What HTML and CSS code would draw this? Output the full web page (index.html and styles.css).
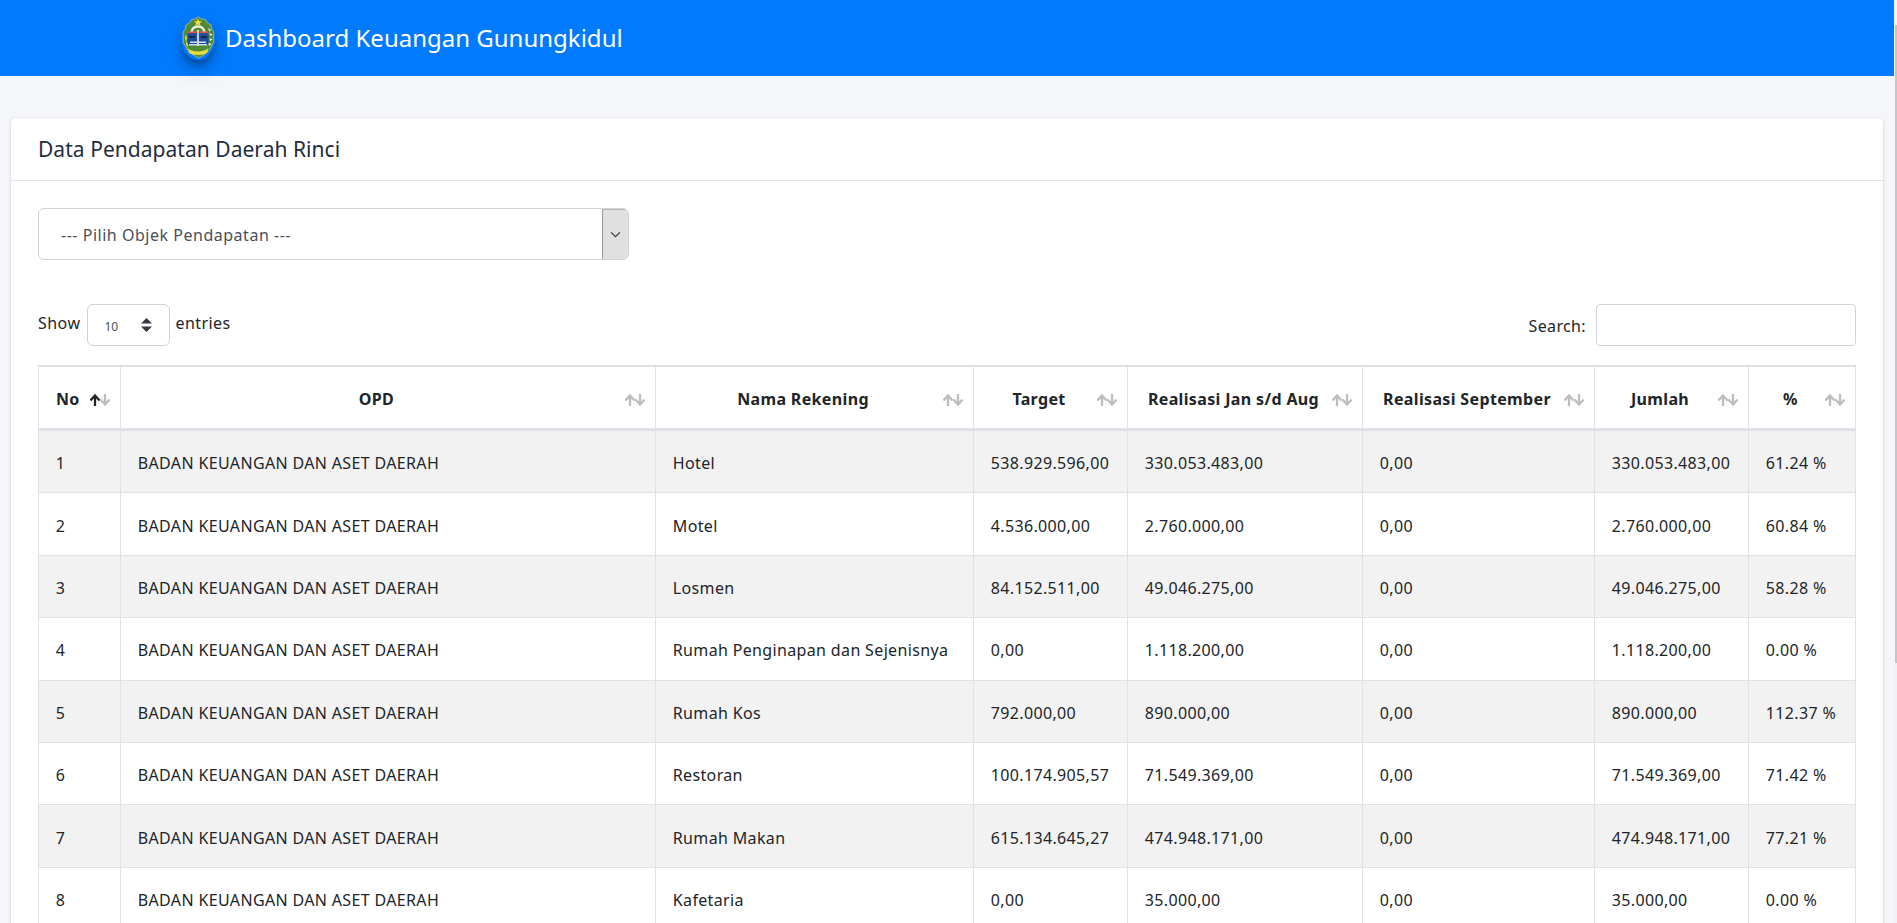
FILE: index.html
```html
<!DOCTYPE html>
<html lang="id">
<head>
<meta charset="utf-8">
<title>Dashboard Keuangan Gunungkidul</title>
<link rel="stylesheet" href="styles.css">
</head>
<body>
<div class="page">
  <div class="main">
    <header class="topbar">
      <svg class="logo" viewBox="0 0 34 44" aria-hidden="true">
        <path d="M17 .5l3 2.500 4.500.5 2 3.500 3.500 2 .5 4 2.500 3-.5 6 .5 4-2.500 4-2 4-4 3.500-3.500 2.500-3.500 2-3.500-2-3.500-2.500-4-3.500-2-4-2.500-4 .5-4-.5-6 2.500-3 .5-4 3.500-2 2-3.500 4.500-.5z" fill="#4f8a35" stroke="#b9c9a0" stroke-width=".7"/>
        <path d="M17 2.500l1.200 2.700 2.900.2-2.200 1.900.7 2.800-2.600-1.500-2.600 1.500.7-2.800-2.200-1.900 2.900-.2z" fill="#f0dc4a"/>
        <path d="M9.500 17c0-5 3-7.500 7.500-7.500s7.500 2.500 7.500 7.500h-2.200c0-3.500-2-5.300-5.300-5.300s-5.300 1.800-5.300 5.300z" fill="#f4f2e6"/>
        <rect x="6.500" y="16" width="21" height="13" fill="#1d4f9e"/>
        <rect x="6.500" y="15.500" width="21" height="1.600" fill="#e2574a"/>
        <rect x="16.200" y="14" width="1.600" height="16" fill="#f4f2e6"/>
        <path d="M8 20h6v2H8zM20 20h6v2h-6z" fill="#10274f"/>
        <path d="M8 28h18v1.500H8zM9 25.500h16V27H9z" fill="#cfdde6"/>
        <path d="M27 12l3 2-1.500 1.500zM28 17l3.500 1.500-2 1.500zM28.500 22l3 1.500-2 1.500zM27.500 27l3 1-2.500 2z" fill="#f6f6ee"/>
        <path d="M5 18l1 4-1 4-1-4zM5.500 25l1.500 3-.5 3.500-1.500-3z" fill="#e6d84a"/>
        <path d="M6.500 32c4 4.500 17 4.500 21 0l-1.500 5c-3 2.500-15 2.500-18 0z" fill="#e8dc3c"/>
      </svg>
      <span class="brand">Dashboard Keuangan Gunungkidul</span>
    </header>
    <section class="card">
      <h1 class="card-title">Data Pendapatan Daerah Rinci</h1>
      <div class="card-body">
        <div class="picker">
          <span class="picker-text">--- Pilih Objek Pendapatan ---</span>
          <span class="picker-btn">
            <svg class="chevron" viewBox="0 0 10 6" aria-hidden="true"><path d="M1 1l4 4 4-4" fill="none" stroke="#333" stroke-width="1"/></svg>
          </span>
        </div>
        <div class="controls">
          <div class="length">
            <span class="length-label">Show</span>
            <span class="length-box">
              <span class="length-value">10</span>
              <svg class="updown" viewBox="0 0 11 14" aria-hidden="true"><path d="M5.500 0L11 5.500H0zM5.500 14L0 8.500h11z" fill="#343a40"/></svg>
            </span>
            <span class="length-label">entries</span>
          </div>
          <div class="search">
            <span class="search-label">Search:</span>
            <span class="search-box"></span>
          </div>
        </div>
        <table class="grid">
          <colgroup>
            <col class="c1"><col class="c2"><col class="c3"><col class="c4"><col class="c5"><col class="c6"><col class="c7"><col class="c8">
          </colgroup>
          <thead>
            <tr>
              <th class="left">No<svg class="sort asc" viewBox="0 0 20 12" aria-hidden="true"><path class="up" d="M5 12V1.500M.5 6.500L5 1.500l4.500 5"/><path class="down" d="M15 0v10.500M10.500 5.500l4.500 5 4.500-5"/></svg></th>
              <th>OPD<svg class="sort" viewBox="0 0 20 12" aria-hidden="true"><path class="up" d="M5 12V1.500M.5 6.500L5 1.500l4.500 5"/><path class="down" d="M15 0v10.500M10.500 5.500l4.500 5 4.500-5"/></svg></th>
              <th>Nama Rekening<svg class="sort" viewBox="0 0 20 12" aria-hidden="true"><path class="up" d="M5 12V1.500M.5 6.500L5 1.500l4.500 5"/><path class="down" d="M15 0v10.500M10.500 5.500l4.500 5 4.500-5"/></svg></th>
              <th>Target<svg class="sort" viewBox="0 0 20 12" aria-hidden="true"><path class="up" d="M5 12V1.500M.5 6.500L5 1.500l4.500 5"/><path class="down" d="M15 0v10.500M10.500 5.500l4.500 5 4.500-5"/></svg></th>
              <th>Realisasi Jan s/d Aug<svg class="sort" viewBox="0 0 20 12" aria-hidden="true"><path class="up" d="M5 12V1.500M.5 6.500L5 1.500l4.500 5"/><path class="down" d="M15 0v10.500M10.500 5.500l4.500 5 4.500-5"/></svg></th>
              <th>Realisasi September<svg class="sort" viewBox="0 0 20 12" aria-hidden="true"><path class="up" d="M5 12V1.500M.5 6.500L5 1.500l4.500 5"/><path class="down" d="M15 0v10.500M10.500 5.500l4.500 5 4.500-5"/></svg></th>
              <th>Jumlah<svg class="sort" viewBox="0 0 20 12" aria-hidden="true"><path class="up" d="M5 12V1.500M.5 6.500L5 1.500l4.500 5"/><path class="down" d="M15 0v10.500M10.500 5.500l4.500 5 4.500-5"/></svg></th>
              <th>%<svg class="sort" viewBox="0 0 20 12" aria-hidden="true"><path class="up" d="M5 12V1.500M.5 6.500L5 1.500l4.500 5"/><path class="down" d="M15 0v10.500M10.500 5.500l4.500 5 4.500-5"/></svg></th>
            </tr>
          </thead>
          <tbody>
            <tr><td>1</td><td>BADAN KEUANGAN DAN ASET DAERAH</td><td>Hotel</td><td>538.929.596,00</td><td>330.053.483,00</td><td>0,00</td><td>330.053.483,00</td><td>61.24 %</td></tr>
            <tr><td>2</td><td>BADAN KEUANGAN DAN ASET DAERAH</td><td>Motel</td><td>4.536.000,00</td><td>2.760.000,00</td><td>0,00</td><td>2.760.000,00</td><td>60.84 %</td></tr>
            <tr><td>3</td><td>BADAN KEUANGAN DAN ASET DAERAH</td><td>Losmen</td><td>84.152.511,00</td><td>49.046.275,00</td><td>0,00</td><td>49.046.275,00</td><td>58.28 %</td></tr>
            <tr><td>4</td><td>BADAN KEUANGAN DAN ASET DAERAH</td><td>Rumah Penginapan dan Sejenisnya</td><td>0,00</td><td>1.118.200,00</td><td>0,00</td><td>1.118.200,00</td><td>0.00 %</td></tr>
            <tr><td>5</td><td>BADAN KEUANGAN DAN ASET DAERAH</td><td>Rumah Kos</td><td>792.000,00</td><td>890.000,00</td><td>0,00</td><td>890.000,00</td><td>112.37 %</td></tr>
            <tr><td>6</td><td>BADAN KEUANGAN DAN ASET DAERAH</td><td>Restoran</td><td>100.174.905,57</td><td>71.549.369,00</td><td>0,00</td><td>71.549.369,00</td><td>71.42 %</td></tr>
            <tr><td>7</td><td>BADAN KEUANGAN DAN ASET DAERAH</td><td>Rumah Makan</td><td>615.134.645,27</td><td>474.948.171,00</td><td>0,00</td><td>474.948.171,00</td><td>77.21 %</td></tr>
            <tr><td>8</td><td>BADAN KEUANGAN DAN ASET DAERAH</td><td>Kafetaria</td><td>0,00</td><td>35.000,00</td><td>0,00</td><td>35.000,00</td><td>0.00 %</td></tr>
          </tbody>
        </table>
      </div>
    </section>
  </div>
  <div class="rail"><div class="rail-top"></div><div class="rail-thumb"></div><div class="rail-rest"></div></div>
</div>
</body>
</html>
```

FILE: styles.css
```css
* { box-sizing: border-box; }
html, body { margin: 0; height: 100%; overflow: hidden; }
body {
  font-family: "Noto Sans", "Liberation Sans", sans-serif;
  font-size: 16px;
  letter-spacing: .35px;
  line-height: 24px;
  color: #212529;
  background: #f4f6f9;
}
.page { display: flex; height: 923px; overflow: hidden; }
.main { flex: 1 1 auto; min-width: 0; overflow: hidden; }

.rail { width: 2px; margin-left: 1px; display: flex; flex-direction: column; flex: none; }
.rail-top { height: 25px; }
.rail-thumb { height: 638px; background: #c6c6c6; }
.rail-rest { flex: 1; background: #f1f1f1; }

.topbar {
  position: relative;
  display: flex;
  align-items: center;
  gap: 11px;
  height: 76px;
  padding-left: 181px;
  background: #007bff;
}
.logo {
  width: 34px;
  height: 44px;
  border-radius: 50%;
  box-shadow: 0 10px 20px rgba(0,0,0,.19), 0 6px 6px rgba(0,0,0,.23);
}
.brand { font-size: 24px; letter-spacing: 0; color: #fff; line-height: 30px; margin: -1px 0 0 -1px; }

.card {
  margin: 42px 11px 0;
  background: #fff;
  border-radius: 4px 4px 0 0;
  box-shadow: 0 0 1px rgba(0,0,0,.125), 0 1px 3px rgba(0,0,0,.2);
}
.card-title {
  margin: 0;
  height: 63px;
  padding: 0 27px;
  border-bottom: 1px solid #e3e6ea;
  font-size: 21px;
  font-weight: 400;
  letter-spacing: .04px;
  line-height: 63px;
  color: #1f2d3d;
}
.card-body { padding: 27px 27px 0; }

.picker {
  display: flex;
  align-items: stretch;
  width: 591px;
  height: 52px;
  border: 1px solid #ced4da;
  border-radius: 6px;
  overflow: hidden;
}
.picker-text { flex: 1; padding-left: 22px; line-height: 52px; letter-spacing: .52px; color: #495057; }
.picker-btn {
  flex: none;
  width: 26px;
  display: flex;
  align-items: center;
  justify-content: center;
  background: #e0e0e0;
  border-left: 1px solid #9a9a9a;
  border-top: 1px solid #b5b5b5;
}
.chevron { width: 11px; height: 7px; }

.controls {
  display: flex;
  justify-content: space-between;
  align-items: center;
  height: 42px;
  margin: 44px 0 19px;
}
.length { display: flex; align-items: center; gap: 4px; }
.length-label { margin-top: -4px; letter-spacing: .45px; }
.length-box {
  display: flex;
  align-items: center;
  justify-content: space-between;
  width: 83px;
  height: 42px;
  padding: 0 17px 0 16px;
  margin: 0 1px 0 3px;
  border: 1px solid #ced4da;
  border-radius: 6px;
}
.length-value { font-size: 12px; letter-spacing: 0; color: #495057; padding-top: 4px; }
.updown { width: 11px; height: 14px; }
.search { display: flex; align-items: center; gap: 10px; }
.search-label { margin-top: 2px; }
.search-box {
  display: block;
  width: 260px;
  height: 42px;
  border: 1px solid #ced4da;
  border-radius: 4px;
}

.grid {
  width: 1818px;
  table-layout: fixed;
  border-collapse: separate;
  border-spacing: 0;
  border-top: 2px solid #dee2e6;
  border-left: 1px solid #dee2e6;
}
.c1 { width: 82px; }
.c2 { width: 535px; }
.c3 { width: 318px; }
.c4 { width: 154px; }
.c5 { width: 235px; }
.c6 { width: 232px; }
.c7 { width: 154px; }
.c8 { width: 107px; }

.grid th {
  position: relative;
  height: 64px;
  padding: 2px 40px 0 17px;
  border-right: 1px solid #dee2e6;
  border-bottom: 3px solid #dee2e6;
  font-weight: 700;
  text-align: center;
  white-space: nowrap;
}
.grid th.left { text-align: left; }
.grid td {
  height: 62.400px;
  padding: 3px 4px 0 16.800px;
  border-right: 1px solid #dee2e6;
  border-bottom: 1px solid #dee2e6;
  white-space: nowrap;
}
.grid tbody tr:nth-child(odd) td { background: #f2f2f2; }

.sort {
  position: absolute;
  top: 27px;
  right: 10px;
  width: 20px;
  height: 12px;
  fill: none;
  stroke-width: 2.300;
}
.sort .up, .sort .down { stroke: #212529; opacity: .3; }
.sort.asc .up { opacity: 1; }
```
